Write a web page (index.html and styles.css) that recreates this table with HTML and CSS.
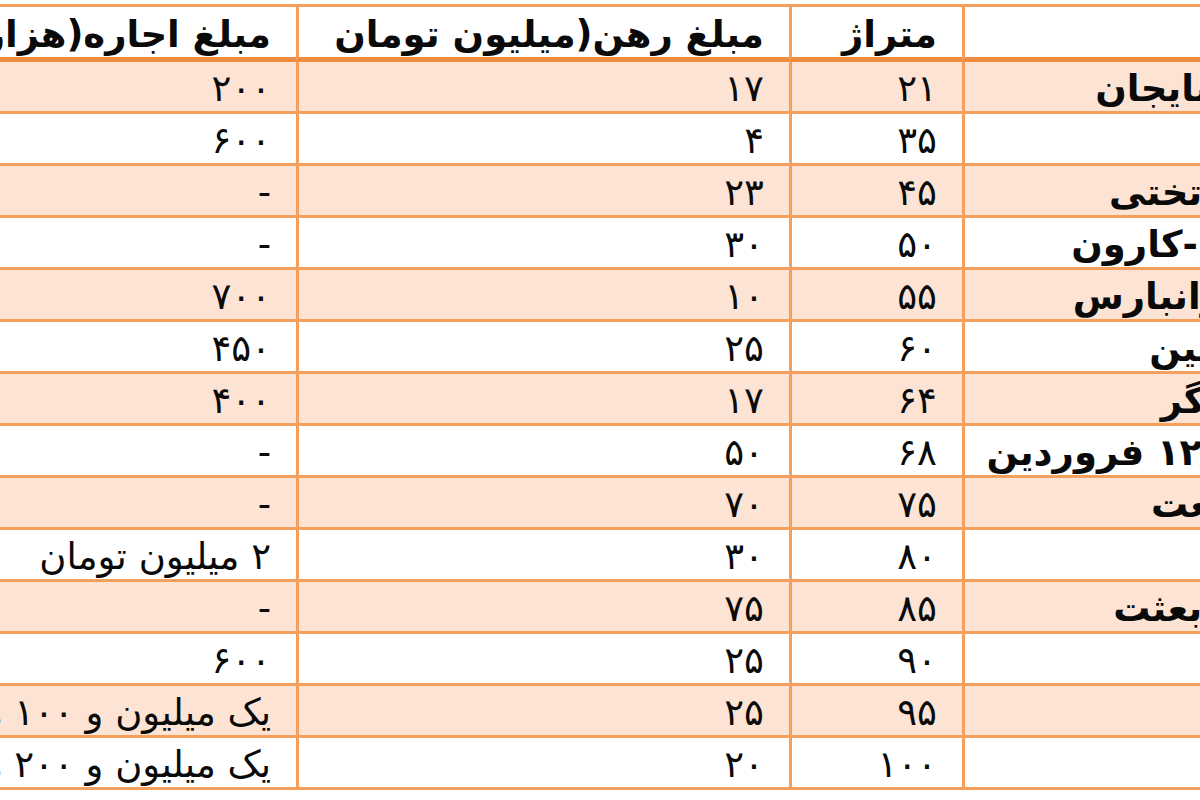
FILE: index.html
```html
<!DOCTYPE html>
<html lang="fa">
<head>
<meta charset="utf-8">
<title>جدول اجاره</title>
<link rel="stylesheet" href="styles.css">
</head>
<body>
<div class="sheet">
  <table class="grid">
    <colgroup>
      <col class="c-name">
      <col class="c-area">
      <col class="c-deposit">
      <col class="c-rent">
    </colgroup>
    <thead>
      <tr>
        <th class="name"></th>
        <th>متراژ</th>
        <th>مبلغ رهن(میلیون تومان</th>
        <th>مبلغ اجاره(هزار تومان)</th>
      </tr>
    </thead>
    <tbody>
      <tr class="band"><td class="name">آذربایجان</td><td>۲۱</td><td>۱۷</td><td>۲۰۰</td></tr>
      <tr><td class="name"></td><td>۳۵</td><td>۴</td><td>۶۰۰</td></tr>
      <tr class="band"><td class="name">پل تختی</td><td>۴۵</td><td>۲۳</td><td>-</td></tr>
      <tr><td class="name">جی-کارون</td><td>۵۰</td><td>۳۰</td><td>-</td></tr>
      <tr class="band"><td class="name">تهرانبارس</td><td>۵۵</td><td>۱۰</td><td>۷۰۰</td></tr>
      <tr><td class="name">حسین</td><td>۶۰</td><td>۲۵</td><td>۴۵۰</td></tr>
      <tr class="band"><td class="name">کارگر</td><td>۶۴</td><td>۱۷</td><td>۴۰۰</td></tr>
      <tr><td class="name">پل ۱۲ فروردین</td><td>۶۸</td><td>۵۰</td><td>-</td></tr>
      <tr class="band"><td class="name">صنعت</td><td>۷۵</td><td>۷۰</td><td>-</td></tr>
      <tr><td class="name"></td><td>۸۰</td><td>۳۰</td><td>۲ میلیون تومان</td></tr>
      <tr class="band"><td class="name">پل بعثت</td><td>۸۵</td><td>۷۵</td><td>-</td></tr>
      <tr><td class="name"></td><td>۹۰</td><td>۲۵</td><td>۶۰۰</td></tr>
      <tr class="band"><td class="name"></td><td>۹۵</td><td>۲۵</td><td>یک میلیون و ۱۰۰ هزار تومان</td></tr>
      <tr><td class="name"></td><td>۱۰۰</td><td>۲۰</td><td>یک میلیون و ۲۰۰ هزار تومان</td></tr>
    </tbody>
  </table>
</div>
</body>
</html>
```

FILE: styles.css
```css
html, body {
  margin: 0;
  padding: 0;
  background: #ffffff;
}

.sheet {
  width: 1200px;
  height: 800px;
  overflow: hidden;
  padding-top: 4px;
  box-sizing: border-box;
}

.grid {
  direction: rtl;
  table-layout: fixed;
  border-collapse: separate;
  border-spacing: 0;
  width: 1366px;
  margin-left: -104px;
  font-family: "DejaVu Sans", sans-serif;
  font-size: 37px;
  line-height: 1;
  color: #0a0a0a;
}

.c-name { width: 300px; }
.c-area { width: 173px; }
.c-deposit { width: 493px; }
.c-rent { width: 400px; }

.grid th,
.grid td {
  box-sizing: border-box;
  padding: 0 25px 0 0;
  text-align: right;
  vertical-align: middle;
  white-space: nowrap;
  overflow: hidden;
  border-left: 3px solid #f4a05c;
}

.grid th {
  height: 58px;
  font-weight: bold;
  background: #ffffff;
  border-top: 3px solid #f4a05c;
  border-bottom: 5px solid #f08c3e;
  padding-top: 4px;
}

.grid td {
  height: 52px;
  font-weight: normal;
  border-bottom: 3px solid #f4a05c;
  padding-top: 4px;
}

.grid td.name {
  font-weight: bold;
  padding-right: 0;
  text-align: right;
}

.grid tr.band td {
  background: #fce3d4;
}
```
